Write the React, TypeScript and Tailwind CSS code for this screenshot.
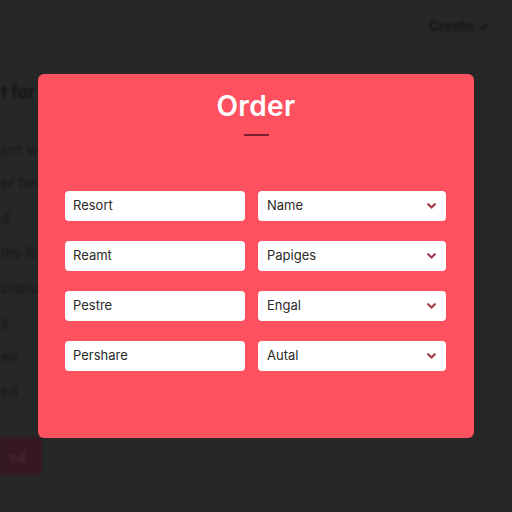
import React from 'react'

const leftFields = ['Resort', 'Reamt', 'Pestre', 'Pershare']
const rightFields = ['Name', 'Papiges', 'Engal', 'Autal']

const bgLines = [
  {text: 't for', top: 'mt-[47px]', cls: 'text-[17px] font-bold'},
  {text: 'ent lo', top: 'mt-[38px]', cls: 'text-[14px]'},
  {text: 'er fan', top: 'mt-[14px]', cls: 'text-[14px]'},
  {text: 'd', top: 'mt-[16px]', cls: 'text-[14px]'},
  {text: 'ths fo', top: 'mt-[16px]', cls: 'text-[14px]'},
  {text: 'cration', top: 'mt-[16px]', cls: 'text-[14px]'},
  {text: 'y', top: 'mt-[15px]', cls: 'text-[14px]'},
  {text: 'ed', top: 'mt-[16px]', cls: 'text-[14px]'},
  {text: 'ed', top: 'mt-[15px]', cls: 'text-[14px]'},
]

function Chevron() {
  return (
    <svg width="9" height="6" viewBox="0 0 9 6" className="shrink-0">
      <path d="M1.2 1.2 L4.5 4.6 L7.8 1.2" fill="none" stroke="#a63b4d" strokeWidth="2.2" strokeLinecap="round" strokeLinejoin="round" />
    </svg>
  )
}

export default function App() {
  return (
    <div
      className="relative w-[512px] h-[512px] overflow-hidden bg-[#262727]"
      style={{fontFamily: 'Inter, "Noto Sans", sans-serif'}}
    >
      {/* page behind the dialog */}
      <div className="flex flex-col h-full blur-[1.3px] text-[#161616]">
        <div className="flex justify-end pr-[22px] pt-[16px] h-[36px]">
          <span className="text-[14px] font-semibold leading-[20px]">Create ✓</span>
        </div>
        <div className="flex flex-col pl-[1px] leading-[19px]">
          {bgLines.map((l, i) => (
            <span key={i} className={`${l.top} ${l.cls}`}>{l.text}</span>
          ))}
        </div>
        <div className="mt-[37px] w-[42px] h-[38px] rounded-r-[6px] bg-[#351820] flex items-center justify-end pr-[16px]">
          <span className="text-[14px] font-semibold text-[#4a2630]">ed</span>
        </div>
      </div>

      {/* dialog */}
      <div className="absolute left-[38px] top-[74px] w-[436px] h-[364px] rounded-[6px] bg-[#fd5160] px-[27px] pt-[16px]">
        <h2 className="text-center text-[28px] font-semibold text-white leading-[32px] tracking-[0.4px]">Order</h2>
        <div className="mx-auto mt-[12px] w-[25px] h-[2px] bg-[#7b1f2c]" />
        <div className="mt-[55px] grid grid-cols-[180px_188px] gap-x-[13px] gap-y-[20px]">
          {leftFields.map((f, i) => (
            <React.Fragment key={f}>
              <div className="h-[30px] rounded-[4px] bg-white flex items-center px-[8px] text-[13px] text-[#2a2a2a]">
                {f}
              </div>
              <div className="h-[30px] rounded-[4px] bg-white flex items-center justify-between pl-[9px] pr-[10px] text-[13px] text-[#2a2a2a]">
                <span>{rightFields[i]}</span>
                <Chevron />
              </div>
            </React.Fragment>
          ))}
        </div>
      </div>
    </div>
  )
}
